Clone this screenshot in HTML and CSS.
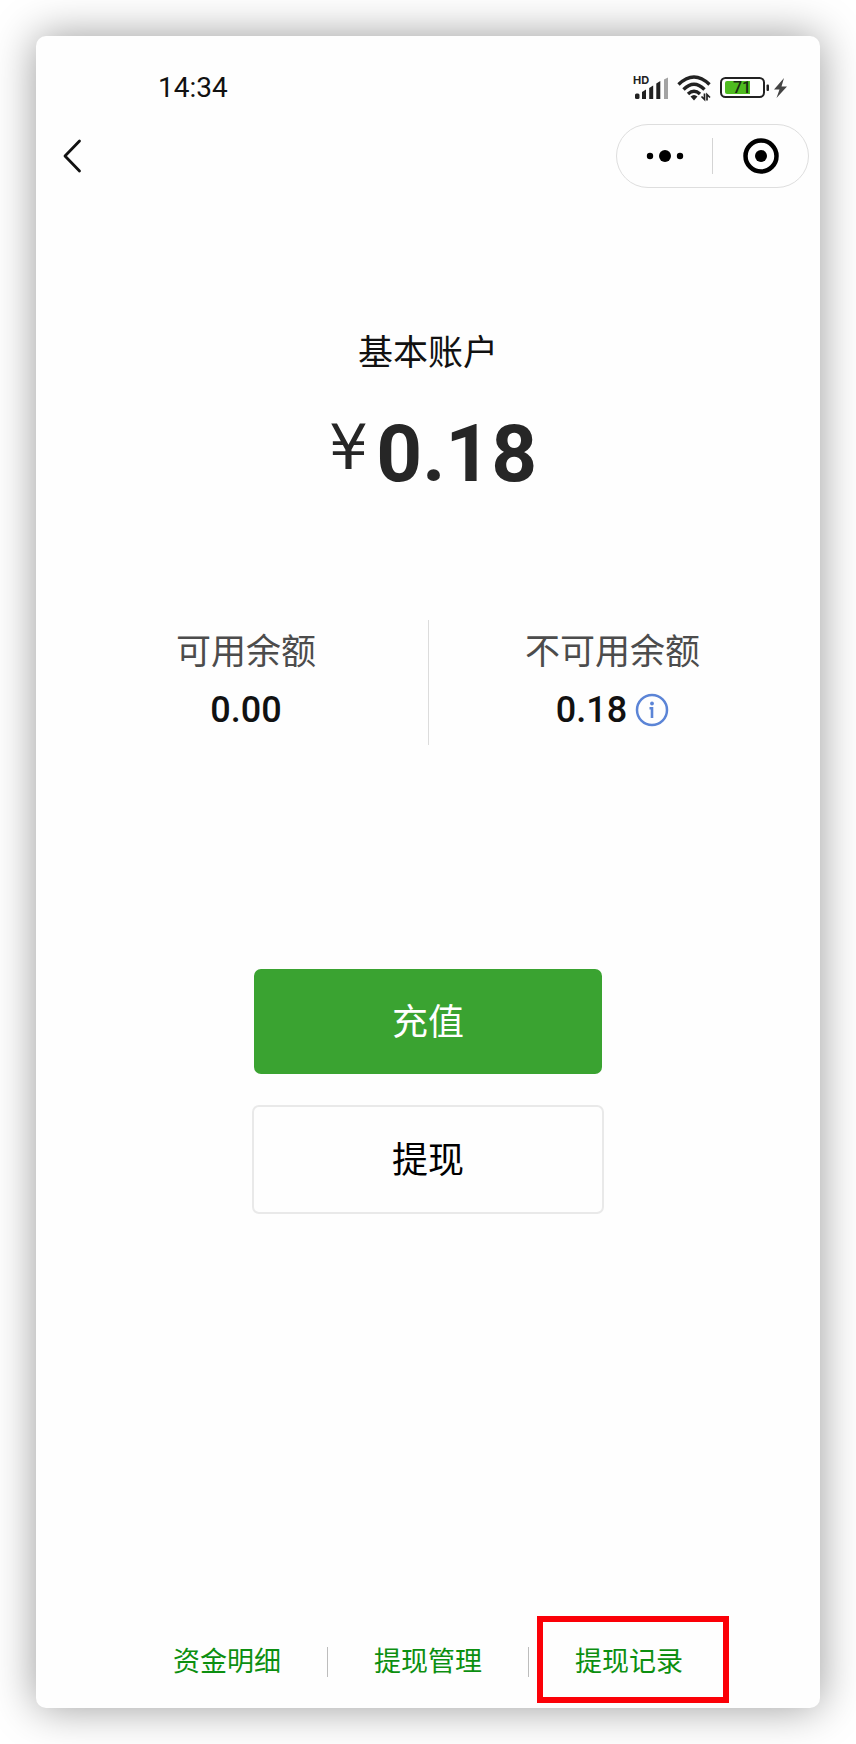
FILE: index.html
```html
<!DOCTYPE html>
<html lang="zh-CN">
<head>
<meta charset="utf-8">
<meta name="viewport" content="width=device-width, initial-scale=1">
<title>基本账户</title>
<link rel="stylesheet" href="styles.css">
</head>
<body>
<div class="phone">
  <div class="status-bar">
    <time class="clock">14:34</time>
    <svg class="status-icons" width="156" height="30" viewBox="0 -2 156 30" role="img" aria-label="信号、无线网络、电量 71">
      <text class="hd-text" x="0" y="9">HD</text>
      <g fill="#222">
        <rect x="2" y="18.500" width="4.500" height="5.500" rx="1.500"/>
        <path d="M9 17 13 14.500V24H9z"/>
        <path d="M16.200 13 20.200 10.500V24H16.200z"/>
        <path d="M23.300 8.500 27.300 6V24H23.300z"/>
        <path d="M31 4.500 35 2.500V24H31z" fill="#a3a3a3"/>
      </g>
      <g fill="none" stroke="#222" stroke-width="3.400">
        <path d="M45.500 9.500Q61-5.500 76.500 9.500"/>
        <path d="M50.500 14.500Q61 4 71.500 14.500"/>
        <path d="M55 19Q61 13.500 67 19"/>
      </g>
      <path d="M57.500 21.500Q61 18.500 64.500 21.500L61 25.500z" fill="#222"/>
      <path d="M71.500 18.500V24.500L68.500 21.500M74 25.500V19.500l3 3" fill="none" stroke="#222" stroke-width="1.700"/>
      <rect x="88" y="3" width="43" height="19" rx="4.500" fill="#fff" stroke="#222" stroke-width="2"/>
      <path d="M94 6H117V19H94Q92 19 92 17V8Q92 6 94 6z" fill="#4fbc20"/>
      <rect x="133.500" y="9.500" width="2.500" height="6.500" rx="1" fill="#222"/>
      <text class="battery-text" x="109" y="18">71</text>
      <path d="M151 3 141 14.500H146.500L143.500 23 154 11.500H148.500z" fill="#444"/>
    </svg>
  </div>

  <header class="nav-bar">
    <button class="back" type="button" aria-label="返回">
      <svg width="20" height="36" viewBox="0 0 20 36"><path d="M17.500 3 3 18 17.500 33" fill="none" stroke="#111" stroke-width="2.800" stroke-linecap="round" stroke-linejoin="round"/></svg>
    </button>
    <div class="capsule">
      <button class="capsule-button" type="button" aria-label="更多">
        <svg width="40" height="36" viewBox="0 0 40 36"><circle cx="5" cy="18" r="3.200"/><circle cx="20" cy="18" r="6"/><circle cx="35" cy="18" r="3.200"/></svg>
      </button>
      <button class="capsule-button" type="button" aria-label="关闭">
        <svg width="36" height="36" viewBox="0 0 36 36"><circle cx="18" cy="18" r="15.500" fill="none" stroke="#000" stroke-width="4.500"/><circle cx="18" cy="18" r="6"/></svg>
      </button>
    </div>
  </header>

  <main class="account">
    <h1 class="title">基本账户</h1>
    <p class="total"><span class="currency">¥</span><span class="amount">0.18</span></p>

    <dl class="balances">
      <div class="balance">
        <dt class="balance-label">可用余额</dt>
        <dd class="balance-value">0.00</dd>
      </div>
      <div class="balance">
        <dt class="balance-label">不可用余额</dt>
        <dd class="balance-value">0.18
          <button class="info" type="button" aria-label="说明">
            <svg width="34" height="34" viewBox="0 0 34 34"><circle cx="17" cy="17" r="15" fill="none" stroke="#5b84d6" stroke-width="2.500"/><circle cx="17" cy="10.500" r="1.900" fill="#5b84d6"/><path d="M14.500 15.200H17V25" fill="none" stroke="#5b84d6" stroke-width="2.600"/></svg>
          </button>
        </dd>
      </div>
    </dl>

    <div class="actions">
      <button class="action action-primary" type="button">充值</button>
      <button class="action action-plain" type="button">提现</button>
    </div>
  </main>

  <nav class="links">
    <a class="link" href="#details">资金明细</a>
    <a class="link" href="#manage">提现管理</a>
    <a class="link link-marked" href="#records">提现记录</a>
  </nav>
</div>
</body>
</html>
```
FILE: styles.css
```css
* {
  box-sizing: border-box;
}

body {
  margin: 0;
  padding: 36px;
  min-height: 100vh;
  display: flex;
  background: #fff;
  color: #111;
  font-family: Roboto, "Noto Sans CJK SC", sans-serif;
}

button {
  padding: 0;
  border: 0;
  background: none;
  color: inherit;
  font: inherit;
  cursor: pointer;
}

svg {
  display: block;
}

.phone {
  flex: 1;
  display: flex;
  flex-direction: column;
  border-radius: 10px;
  background: #fefefe;
  box-shadow: 0 0 44px rgba(0, 0, 0, 0.4);
}

.status-bar {
  display: flex;
  align-items: center;
  justify-content: space-between;
  padding: 36px 31px 0 122px;
}

.clock {
  font-size: 28px;
  line-height: 32px;
}

.status-icons {
  overflow: visible;
}

.hd-text {
  font: 700 11px Inter, sans-serif;
  fill: #222;
}

.battery-text {
  font: 500 16px Roboto, sans-serif;
  text-anchor: middle;
  fill: #1a2a14;
}

.nav-bar {
  display: flex;
  align-items: center;
  justify-content: space-between;
  padding: 20px 11px 0 26px;
}

.capsule {
  display: flex;
  width: 193px;
  height: 64px;
  align-items: center;
  border: 1px solid #dedede;
  border-radius: 32px;
}

.capsule-button {
  flex: 1;
  display: flex;
  justify-content: center;
}

.capsule-button + .capsule-button {
  border-left: 1px solid #d4d4d4;
}

.account {
  display: flex;
  flex-direction: column;
  align-items: center;
  padding-top: 146px;
}

.title {
  margin: 0;
  font-size: 35px;
  font-weight: 400;
  line-height: 40px;
}

.total {
  display: flex;
  align-items: center;
  gap: 8px;
  height: 108px;
  margin: 26px 0 0;
  padding-left: 10px;
  color: #262626;
  line-height: 96px;
}

.currency {
  padding-bottom: 12px;
  font-family: "DejaVu Sans", sans-serif;
  font-size: 62px;
}

.amount {
  font-size: 80px;
  font-weight: 700;
}

.balances {
  display: flex;
  align-self: stretch;
  margin: 112px 0 0;
}

.balance {
  width: 50%;
  display: flex;
  flex-direction: column;
  align-items: center;
  gap: 15px;
  padding: 13px 48px 13px 24px;
}

.balance:first-child {
  padding-right: 24px;
  padding-left: 52px;
}

.balance + .balance {
  border-left: 1px solid #dcdcdc;
}

.balance-label {
  color: #4c4c4c;
  font-size: 35px;
  line-height: 40px;
}

.balance-value {
  display: flex;
  align-items: center;
  gap: 8px;
  margin: 0;
  font-size: 36px;
  font-weight: 500;
  line-height: 44px;
}

.actions {
  display: flex;
  flex-direction: column;
  align-items: center;
  gap: 31px;
  width: 45%;
  margin-top: 224px;
}

.action {
  padding: 30px 28px 27px;
  border-radius: 7px;
  font-size: 36px;
  line-height: 48px;
}

.action-primary {
  width: calc(100% - 4px);
  background: #3aa331;
  color: #fff;
}

.action-plain {
  width: 100%;
  border: 2px solid #e9e9e9;
  color: #000;
}

.links {
  display: flex;
  justify-content: center;
  margin-top: auto;
  padding: 24px 0 31px;
}

.link {
  position: relative;
  padding: 0 46px;
  color: #0c8f10;
  font-size: 27px;
  line-height: 30px;
  text-decoration: none;
}

.link + .link {
  border-left: 1px solid #bdbdbd;
}

.link-marked::after {
  content: "";
  position: absolute;
  inset: -31px 0 -26px 8px;
  border: 6px solid #fb0007;
}
```
